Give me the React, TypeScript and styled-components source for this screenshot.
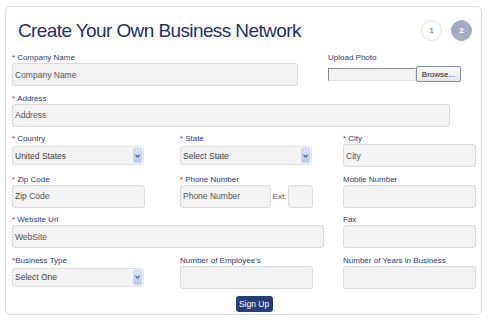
import React from 'react'
import styled, { createGlobalStyle } from 'styled-components'

const GlobalStyle = createGlobalStyle`
    html, body {
        margin: 0;
        padding: 0;
        background: #ffffff;
    }
    body {
        font-family: "Liberation Sans", Arial, sans-serif;
    }
`

interface WidthProps {
    w: number;
}

const Page = styled.div`
    padding: 6px 0 0 5px;
    width: 491px;
    height: 325px;
    box-sizing: border-box;
`
const Card = styled.div`
    width: 477px;
    height: 309px;
    box-sizing: border-box;
    border: 1px solid #dcdcdc;
    border-radius: 5px;
    padding: 0 0 0 6px;
`
const Header = styled.div`
    display: flex;
    align-items: center;
    height: 46px;
    padding: 0 9px 0 6px;
`
const Title = styled.h1`
    flex: 1;
    margin: 0;
    font-family: "Liberation Sans", Arial, sans-serif;
    font-weight: 400;
    font-size: 19px;
    color: #1e3269;
    letter-spacing: -0.6px;
    padding-top: 2px;
`
const Steps = styled.div`
    display: flex;
    gap: 9px;
    padding-top: 1px;
`
const Step = styled.div<{ active?: boolean }>`
    width: 21px;
    height: 21px;
    box-sizing: border-box;
    border-radius: 50%;
    border: 1px solid ${p => p.active ? '#a3acc2' : '#e2e2e2'};
    background: ${p => p.active ? '#a3acc2' : '#ffffff'};
    color: ${p => p.active ? '#ffffff' : '#9a9a9a'};
    font-size: 8px;
    font-weight: 700;
    display: flex;
    align-items: center;
    justify-content: center;
`
const Row = styled.div`
    display: flex;
    align-items: flex-start;
    height: 40.5px;
`
const Field = styled.div<WidthProps>`
    width: ${p => p.w}px;
    flex: none;
`
const Spacer = styled.div<WidthProps>`
    width: ${p => p.w}px;
    flex: none;
`
const Label = styled.div`
    height: 10px;
    line-height: 10px;
    font-size: 8px;
    color: #2a3c78;
    white-space: nowrap;
`
const Star = styled.span<{ tight?: boolean }>`
    color: #e02020;
    margin-right: ${p => p.tight ? '0' : '2px'};
`
const Input = styled.div<{ width?: number }>`
    height: 23px;
    ${p => p.width ? `width: ${p.width}px;` : ''}
    box-sizing: border-box;
    background: #f3f3f3;
    border: 1px solid #dadada;
    border-radius: 3px;
    font-size: 8.5px;
    color: #555555;
    display: flex;
    align-items: center;
    padding-left: 2px;
`
const SelectBox = styled.div`
    margin-top: 2px;
    height: 19px;
    box-sizing: border-box;
    background: #f3f3f3;
    border: 1px solid #e2e2e2;
    border-radius: 3px;
    font-size: 8.5px;
    color: #444444;
    display: flex;
    align-items: center;
    padding-left: 2px;
    justify-content: space-between;
`
const Arrow = styled.span`
    width: 9px;
    height: 15px;
    margin-right: 1px;
    border-radius: 2px;
    background: linear-gradient(#d8e3fb, #b9cbf3);
    border: 1px solid #c8d4ee;
    box-sizing: border-box;
    display: flex;
    align-items: center;
    justify-content: center;
`
const InlineRow = styled.div`
    display: flex;
    align-items: flex-end;
`
const ExtLabel = styled.span`
    font-size: 8px;
    color: #555555;
    width: 16px;
    padding-left: 2px;
    line-height: 23px;
`
const FileRow = styled.div`
    display: flex;
    align-items: center;
    margin-top: 3px;
`
const FileText = styled.div`
    width: 88px;
    height: 13px;
    box-sizing: border-box;
    background: #f2f2f2;
    border-top: 1px solid #8a8a8a;
    border-left: 1px solid #8a8a8a;
    border-bottom: 1px solid #e4e4e4;
    border-right: 1px solid #e4e4e4;
`
const BrowseButton = styled.div`
    width: 45px;
    height: 16px;
    box-sizing: border-box;
    border: 1px solid #7f8fae;
    border-radius: 2px;
    background: linear-gradient(#fafafa, #e6e6e6);
    font-size: 8px;
    color: #222222;
    display: flex;
    align-items: center;
    justify-content: center;
`
const Footer = styled.div`
    display: flex;
    justify-content: center;
    padding-right: 6px;
`
const SubmitButton = styled.button`
    width: 37px;
    height: 16px;
    padding: 0;
    border: none;
    border-radius: 3px;
    background: #233f7c;
    color: #ffffff;
    font-family: "Liberation Sans", Arial, sans-serif;
    font-size: 8.5px;
    margin-left: 21px;
`

const Chevron = () => (
    <svg width="5" height="4" viewBox="0 0 5 4">
        <path d="M0.5 0.8 L2.5 3 L4.5 0.8" fill="none" stroke="#2d4a8a" strokeWidth="1.1" />
    </svg>
)

const FieldLabel = ({ text, req, tight }: { text: string; req?: boolean; tight?: boolean }) => (
    <Label>{req && <Star tight={tight}>*</Star>}{text}</Label>
)

const App = () => {
    return (
        <Page>
            <GlobalStyle />
            <Card>
                <Header>
                    <Title>Create Your Own Business Network</Title>
                    <Steps>
                        <Step>1</Step>
                        <Step active>2</Step>
                    </Steps>
                </Header>
                <Row>
                    <Field w={286}>
                        <FieldLabel text="Company Name" req />
                        <Input>Company Name</Input>
                    </Field>
                    <Spacer w={30} />
                    <Field w={133}>
                        <FieldLabel text="Upload Photo" />
                        <FileRow>
                            <FileText />
                            <BrowseButton>Browse...</BrowseButton>
                        </FileRow>
                    </Field>
                </Row>
                <Row>
                    <Field w={438}>
                        <FieldLabel text="Address" req />
                        <Input>Address</Input>
                    </Field>
                </Row>
                <Row>
                    <Field w={132}>
                        <FieldLabel text="Country" req />
                        <SelectBox>United States<Arrow><Chevron /></Arrow></SelectBox>
                    </Field>
                    <Spacer w={36} />
                    <Field w={132}>
                        <FieldLabel text="State" req />
                        <SelectBox>Select State<Arrow><Chevron /></Arrow></SelectBox>
                    </Field>
                    <Spacer w={31} />
                    <Field w={133}>
                        <FieldLabel text="City" req />
                        <Input>City</Input>
                    </Field>
                </Row>
                <Row>
                    <Field w={133}>
                        <FieldLabel text="Zip Code" req />
                        <Input>Zip Code</Input>
                    </Field>
                    <Spacer w={35} />
                    <Field w={133}>
                        <FieldLabel text="Phone Number" req />
                        <InlineRow>
                            <Input width={92}>Phone Number</Input>
                            <ExtLabel>Ext:</ExtLabel>
                            <Input width={25} />
                        </InlineRow>
                    </Field>
                    <Spacer w={30} />
                    <Field w={133}>
                        <FieldLabel text="Mobile Number" />
                        <Input />
                    </Field>
                </Row>
                <Row>
                    <Field w={312}>
                        <FieldLabel text="Website Url" req />
                        <Input>WebSite</Input>
                    </Field>
                    <Spacer w={19} />
                    <Field w={133}>
                        <FieldLabel text="Fax" />
                        <Input />
                    </Field>
                </Row>
                <Row>
                    <Field w={132}>
                        <FieldLabel text="Business Type" req tight />
                        <SelectBox>Select One<Arrow><Chevron /></Arrow></SelectBox>
                    </Field>
                    <Spacer w={36} />
                    <Field w={133}>
                        <FieldLabel text="Number of Employee's" />
                        <Input />
                    </Field>
                    <Spacer w={30} />
                    <Field w={133}>
                        <FieldLabel text="Number of Years in Business" />
                        <Input />
                    </Field>
                </Row>
                <Footer>
                    <SubmitButton>Sign Up</SubmitButton>
                </Footer>
            </Card>
        </Page>
    )
}

export default App
